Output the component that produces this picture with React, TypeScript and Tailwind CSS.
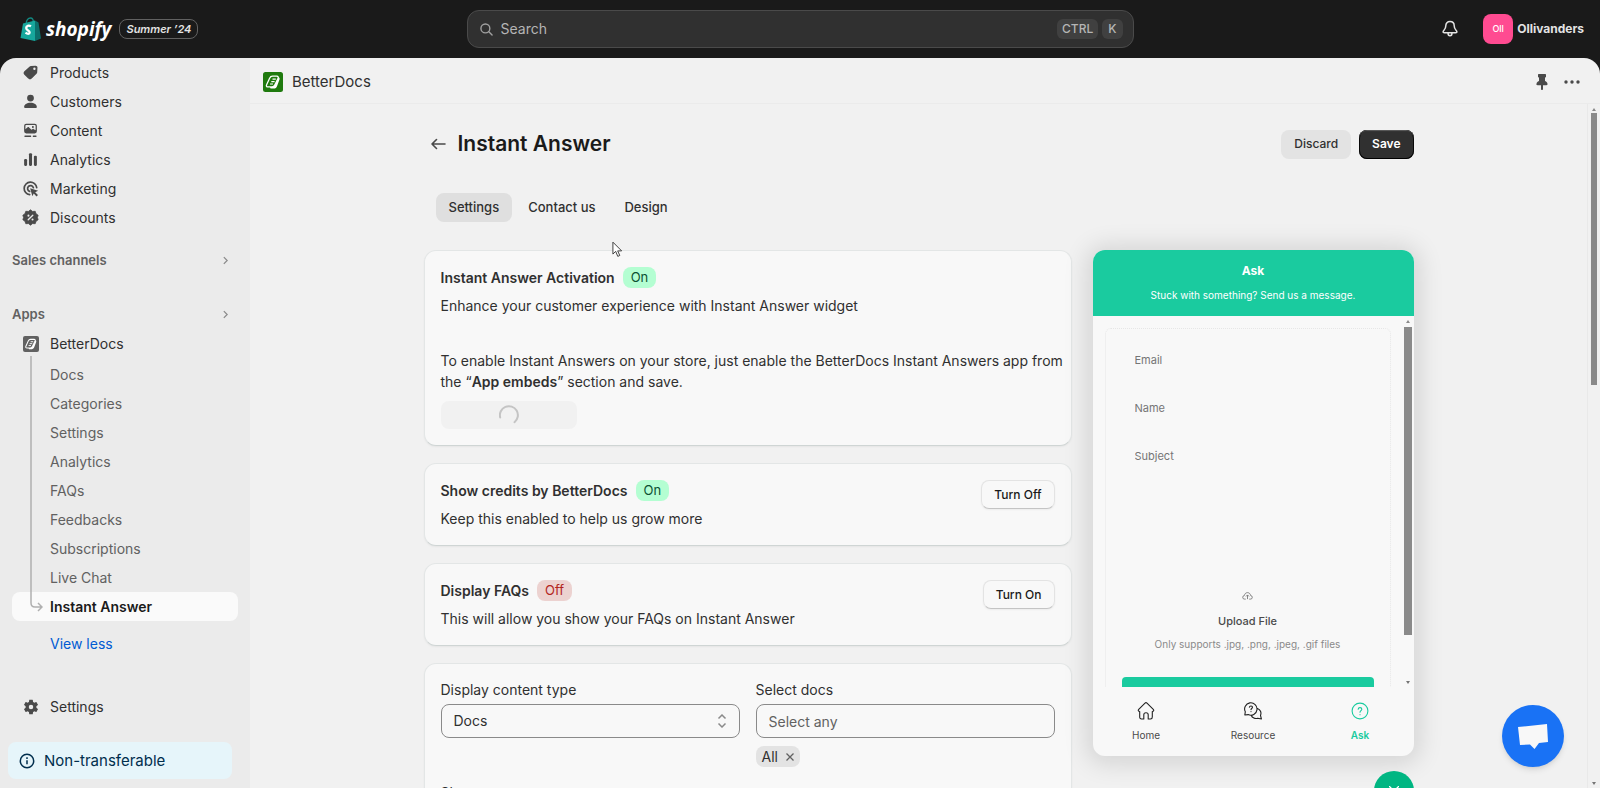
import {ReactNode, useState} from "react";
import clsx from "clsx";

const mainNav = [
  {label: "Products", icon: "tag"},
  {label: "Customers", icon: "person"},
  {label: "Content", icon: "image"},
  {label: "Analytics", icon: "chart"},
  {label: "Marketing", icon: "target"},
  {label: "Discounts", icon: "discount"},
];

const appNav = ["Docs", "Categories", "Settings", "Analytics", "FAQs", "Feedbacks", "Subscriptions", "Live Chat"];

const tabs = ["Settings", "Contact us", "Design"];

const messageFields = ["Email", "Name", "Subject"];

const navIcons: Record<string, ReactNode> = {
  tag: (
      <path
          fillRule="evenodd"
          d="M10.500 2.400 16 2c1.300 0 2.200.9 2.200 2.200l-.3 5.600c0 .7-.3 1.300-.8 1.800l-5.600 5.600c-1.200 1.200-3 1.200-4.200 0L2.800 12.700c-1.200-1.200-1.200-3 0-4.200L8.700 3.200c.5-.5 1.100-.8 1.800-.8ZM14.600 7a1.400 1.400 0 1 0 0-2.800 1.400 1.400 0 0 0 0 2.800Z"
      />
  ),
  person: <path d="M10 2a4 4 0 1 1 0 8 4 4 0 0 1 0-8ZM2.500 16.500c0-3 3.300-5.100 7.500-5.100s7.500 2.100 7.500 5.100c0 .8-.4 1.200-1.200 1.200H3.700c-.8 0-1.200-.4-1.200-1.200Z" />,
  image: (
      <path
          fillRule="evenodd"
          d="M5 2h10A2.500 2.500 0 0 1 17.500 4.500v6.500a2.500 2.500 0 0 1-2.500 2.500h-10A2.500 2.500 0 0 1 2.500 11V4.500a2.500 2.500 0 0 1 2.500-2.500ZM4 8.500l2.600-2.200c.5-.4 1.200-.4 1.700.1l2.900 2.800 1.300-.9c.4-.3 1-.3 1.400.1l2.100 1.400V4.500c0-.6-.4-1-1-1h-10c-.6 0-1 .4-1 1v4ZM12.800 7.100a1.200 1.200 0 1 0 0-2.400 1.200 1.200 0 0 0 0 2.400ZM3.500 15.800h6.700c.9 0 .9 1.700 0 1.700H3.500c-1 0-1-1.700 0-1.700ZM13.300 15.800h3.200c.9 0 .9 1.700 0 1.700h-3.200c-.9 0-.9-1.700 0-1.700Z"
      />
  ),
  chart: (
      <>
        <rect x="2.500" y="9.500" width="3.500" height="8" rx="1.300" />
        <rect x="8.200" y="2.500" width="3.600" height="15" rx="1.300" />
        <rect x="14" y="5.500" width="3.500" height="12" rx="1.300" />
      </>
  ),
  target: (
      <>
        <path d="M17.300 9A7.400 7.400 0 1 0 9 17.300M13.400 9a3.500 3.500 0 1 0-4.400 4.400" fill="none" stroke="currentColor" strokeWidth="2" strokeLinecap="round" />
        <path d="m9.600 9.600 9.400 2.900-3.500 1.800 3.300 3.300-1.700 1.700-3.300-3.300-1.600 3Z" />
      </>
  ),
  discount: (
      <>
        <path d="M10 1 12.400 2.900 15.500 2.700 16.500 5.600 19 7.400 18.100 10 19 12.600 16.500 14.400 15.500 17.300 12.400 17.100 10 19 7.600 17.100 4.500 17.300 3.500 14.400 1 12.600 1.900 10 1 7.400 3.500 5.600 4.500 2.700 7.600 2.900Z" stroke="currentColor" strokeLinejoin="round" />
        <path d="m7.300 12.700 5.400-5.400" stroke="#ebebeb" strokeWidth="1.600" strokeLinecap="round" />
        <circle cx="7.600" cy="7.800" r="1.200" fill="#ebebeb" />
        <circle cx="12.400" cy="12.300" r="1.200" fill="#ebebeb" />
      </>
  ),
};

function NavIcon({name}: {name: string}) {
  return (
      <svg viewBox="0 0 20 20" className="size-[17px] text-[#4a4a4a]" fill="currentColor" aria-hidden="true">
        {navIcons[name]}
      </svg>
  );
}

function BetterDocsIcon({className}: {className: string}) {
  return (
      <svg viewBox="0 0 20 20" className={className} aria-hidden="true">
        <rect width="20" height="20" rx="2.500" fill="currentColor" />
        <path d="M14.500 5c1.800 0 2.500 1 2 2.500l-2.500 6.700c-.5 1.500-1.600 2.300-3.200 2.300H7.500l-.5-1.500h3.500Z" fill="#fff" />
        <path d="M9.500 4.200h4.300c1.300 0 1.800.9 1.300 2l-3.200 6.700c-.6 1.300-1.500 2-2.900 2H5c-1.400 0-2-.9-1.400-2.200l3-6.500c.6-1.300 1.500-2 2.900-2Z" fill="currentColor" stroke="#fff" strokeWidth="1.300" />
        <path d="M9.500 7.200h3.300M8.300 9.600h3.300M7 12h3" stroke="#fff" strokeWidth="1.200" />
      </svg>
  );
}

function ShopifyLogo() {
  return (
      <div className="flex items-center gap-1">
        <svg viewBox="0 0 22 24" className="h-6 w-[22px]" aria-hidden="true">
          <path d="M6 7C6.500 3 8.500 1 10.500 1s3 2 3 5" fill="none" stroke="#128a83" strokeWidth="1.300" />
          <path d="M3 6.500 15 3.500V24L.5 21Z" fill="#17a79c" />
          <path d="m15 3.500 3.500 2L21 21.500 15 24Z" fill="#0c6f6b" />
          <path d="M11 9.300C8.700 8 6.200 8.800 6.200 11c0 2.500 3.600 2.500 3.500 4.600 0 1.600-2.400 1.500-4.200.1" fill="none" stroke="#fff" strokeWidth="2.300" />
        </svg>
        <span className="font-['Open_Sans',sans-serif] text-[19px] leading-6 font-bold text-white italic">shopify</span>
      </div>
  );
}

function Header() {
  return (
      <header className="grid h-[58px] grid-cols-[1fr_667px_1fr] items-center bg-[#1a1a1a] text-[#e3e3e3]">
        <div className="flex items-center gap-2 pl-5">
          <ShopifyLogo />
          <span className="rounded-lg border border-[#616161] px-[6px] text-[11px] leading-[18px] font-semibold italic">Summer ’24</span>
        </div>
        <label className="flex h-[38px] items-center gap-2 rounded-xl border border-[#4a4a4a] bg-[#303030] pr-[10px] pl-3">
          <svg viewBox="0 0 14 14" className="size-[13px] text-[#a0a0a0]" fill="none" stroke="currentColor" strokeWidth="1.500" strokeLinecap="round" aria-hidden="true">
            <circle cx="5.800" cy="5.800" r="4.800" />
            <path d="m9.500 9.500 3.500 3.500" />
          </svg>
          <input type="search" placeholder="Search" aria-label="Search" className="min-w-0 flex-1 bg-transparent text-sm outline-none placeholder:text-[#b5b5b5]" />
          <div className="flex gap-1">
            <kbd className="rounded-md bg-[#404040] px-[5px] font-[Inter,sans-serif] text-xs leading-5 font-medium text-[#b5b5b5]">CTRL</kbd>
            <kbd className="rounded-md bg-[#404040] px-[6px] font-[Inter,sans-serif] text-xs leading-5 font-medium text-[#b5b5b5]">K</kbd>
          </div>
        </label>
        <div className="flex items-center justify-end gap-6 pr-4">
          <button type="button" aria-label="Notifications">
            <svg viewBox="0 0 18 18" className="size-[18px]" fill="none" stroke="currentColor" strokeWidth="1.500" strokeLinejoin="round" aria-hidden="true">
              <path d="M9 1.500c-2.600 0-4.200 1.900-4.200 4.300 0 2.200-.6 3.200-1.800 4.400-.9.900-1.500 2.500.3 2.500h11.400c1.800 0 1.200-1.600.3-2.500-1.200-1.200-1.800-2.200-1.800-4.400 0-2.400-1.600-4.300-4.200-4.300ZM7 13c0 1.500.8 2.800 2 2.800s2-1.300 2-2.800" />
            </svg>
          </button>
          <button type="button" className="flex items-center gap-1 text-xs font-bold">
            <span className="flex size-[30px] items-center justify-center rounded-lg bg-[#ff4b91] text-[9px] font-medium text-white">Oll</span>
            Ollivanders
          </button>
        </div>
      </header>
  );
}

function Chevron() {
  return (
      <svg viewBox="0 0 6 10" className="h-[9px] w-[5px] text-[#8a8a8a]" fill="none" stroke="currentColor" strokeWidth="1.500" aria-hidden="true">
        <path d="m1 1 4 4-4 4" />
      </svg>
  );
}

function Sidebar() {
  return (
      <aside className="flex w-[250px] shrink-0 flex-col bg-[#ebebeb] text-sm text-[#303030]">
        <nav className="flex flex-col px-3">
          {mainNav.map((item) => (
              <a key={item.label} href="#" className="flex h-[29px] items-center gap-[11px] pl-[10px]">
                <NavIcon name={item.icon} />
                {item.label}
              </a>
          ))}
          <button type="button" className="mt-[14px] flex h-[29px] items-center justify-between pr-[10px] text-[13px] font-semibold text-[#616161]">
            Sales channels
            <Chevron />
          </button>
          <button type="button" className="mt-[25px] flex h-[29px] items-center justify-between pr-[10px] text-[13px] font-semibold text-[#616161]">
            Apps
            <Chevron />
          </button>
          <a href="#" className="flex h-[29px] items-center gap-[11px] pl-[11px]">
            <BetterDocsIcon className="size-4 text-[#616161]" />
            BetterDocs
          </a>
          <div className="relative flex flex-col pt-[2px] text-[#616161]">
            {appNav.map((label) => (
                <a key={label} href="#" className="flex h-[29px] items-center pl-[38px]">{label}</a>
            ))}
            <a href="#" className="flex h-[29px] items-center rounded-lg bg-[#fafafa] pl-[38px] font-semibold text-[#1a1a1a]">Instant Answer</a>
            {/* connector from the app icon down to the active page */}
            <svg viewBox="0 0 13 257" className="absolute bottom-[8px] left-[18px] h-[257px] w-[13px] text-[#b0b0b0]" fill="none" stroke="currentColor" strokeWidth="1.500" aria-hidden="true">
              <path d="M1 0v247q0 4 4 4h6M8 247l4 4-4 4" />
            </svg>
          </div>
          <a href="#" className="mt-2 flex h-[29px] items-center pl-[38px] text-[#005bd3]">View less</a>
        </nav>
        <div className="mt-auto flex flex-col px-2 pb-[9px]">
          <a href="#" className="flex h-[29px] items-center gap-[10px] pl-[14px]">
            <svg viewBox="0 0 24 24" className="size-[18px] text-[#4a4a4a]" fill="currentColor" aria-hidden="true">
              <path d="M19.140 12.940c.040-.3.060-.610.060-.940 0-.320-.020-.640-.070-.940l2.030-1.580a.490.490 0 0 0 .120-.610l-1.920-3.320a.488.488 0 0 0-.590-.220l-2.390.960c-.5-.380-1.030-.7-1.620-.940l-.360-2.540a.484.484 0 0 0-.480-.410h-3.840c-.240 0-.430.170-.470.410l-.360 2.540c-.590.240-1.130.570-1.620.940l-2.390-.960c-.220-.080-.470 0-.590.220L2.740 8.870c-.120.210-.080.470.120.610l2.030 1.580c-.050.3-.090.630-.090.940s.020.640.070.940l-2.030 1.580a.490.490 0 0 0-.120.610l1.920 3.320c.120.220.370.290.590.220l2.390-.960c.5.380 1.030.7 1.620.940l.360 2.540c.050.240.240.410.480.410h3.840c.240 0 .440-.170.470-.410l.360-2.540c.590-.240 1.130-.560 1.620-.940l2.390.960c.220.080.470 0 .590-.220l1.920-3.320c.120-.220.070-.470-.120-.610l-2.010-1.580zM12 15a3 3 0 1 1 0-6 3 3 0 0 1 0 6z" />
            </svg>
            Settings
          </a>
          <a href="#" className="mt-[21px] mr-[10px] flex h-[37px] items-center gap-[9px] rounded-lg bg-[#e6f5fa] pl-[11px] text-[15px] text-[#002e4d]">
            <svg viewBox="0 0 16 16" className="size-4" fill="none" stroke="currentColor" strokeWidth="1.500" aria-hidden="true">
              <circle cx="8" cy="8" r="6.700" />
              <path d="M8 7.200v4M8 4.300v1.600" />
            </svg>
            Non-transferable
          </a>
        </div>
      </aside>
  );
}

function Badge({on}: {on: boolean}) {
  return (
      <span className={clsx("rounded-lg px-2 text-[13px] leading-[21px]", on ? "bg-[#b4fed2] text-[#0c5132]" : "bg-[#ecd2d0] text-[#b3261e]")}>
        {on ? "On" : "Off"}
      </span>
  );
}

function Card({children}: {children: ReactNode}) {
  return <section className="rounded-xl border border-[#e3e6e6] border-b-[#cfd5d4] bg-[#f8f8f8] p-4 shadow-xs">{children}</section>;
}

type ToggleCardProps = {
  title: string;
  text: string;
  on: boolean;
};

function ToggleCard({title, text, on}: ToggleCardProps) {
  return (
      <Card>
        <div className="flex items-start justify-between">
          <div>
            <div className="flex items-center gap-2">
              <h2 className="font-semibold">{title}</h2>
              <Badge on={on} />
            </div>
            <p className="mt-2 leading-5">{text}</p>
          </div>
          <button type="button" className="h-[29px] rounded-lg border border-[#e3e3e3] border-b-[#c4c4c4] px-3 text-xs font-medium text-[#1a1a1a] shadow-xs">
            {on ? "Turn Off" : "Turn On"}
          </button>
        </div>
      </Card>
  );
}

function ContentCard() {
  return (
      <Card>
        <div className="grid grid-cols-2 gap-4">
          <div className="flex flex-col">
            <label htmlFor="content-type" className="leading-5">Display content type</label>
            <div className="relative mt-1">
              <select id="content-type" className="h-[34px] w-full appearance-none rounded-lg border border-[#8a8a8a] px-3">
                <option>Docs</option>
              </select>
              <svg viewBox="0 0 10 14" className="pointer-events-none absolute top-[10px] right-[13px] h-[14px] w-[10px] text-[#8a8a8a]" fill="none" stroke="currentColor" strokeWidth="1.500" aria-hidden="true">
                <path d="m1.500 4.500 3.500-3.500 3.500 3.500M1.500 9.500l3.500 3.500 3.500-3.500" />
              </svg>
            </div>
          </div>
          <div className="flex flex-col items-start">
            <label htmlFor="docs" className="leading-5">Select docs</label>
            <input id="docs" placeholder="Select any" className="mt-1 h-[34px] w-full rounded-lg border border-[#8a8a8a] px-3 placeholder:text-[#616161]" />
            <span className="mt-2 flex h-[21px] items-center gap-2 rounded-lg bg-[#e3e3e3] px-[6px]">
              All
              <button type="button" aria-label="Remove All" className="text-[#616161]">
                <svg viewBox="0 0 8 8" className="size-2" fill="none" stroke="currentColor" strokeWidth="1.300" aria-hidden="true">
                  <path d="m.5.5 7 7M7.500.5l-7 7" />
                </svg>
              </button>
            </span>
          </div>
        </div>
        <label htmlFor="show-on" className="mt-4 block leading-5">Show on</label>
        <input id="show-on" className="mt-1 h-[34px] w-full rounded-lg border border-[#8a8a8a] px-3" />
      </Card>
  );
}

function WidgetPreview() {
  return (
      <div className="w-[321px] shrink-0">
        <div className="flex h-[506px] flex-col overflow-hidden rounded-xl bg-[#f8f8f8] shadow-[0_2px_24px_6px_rgba(0,0,0,0.12)]">
          <div className="flex h-[66px] shrink-0 flex-col items-center bg-[#1acb9f] pt-[11px] text-white">
            <h2 className="text-xs leading-5 font-bold">Ask</h2>
            <p className="mt-1 text-[10px] leading-5">Stuck with something? Send us a message.</p>
          </div>
          <div className="flex min-h-0 flex-1 text-[11px]">
            <div className="min-w-0 flex-1 overflow-hidden pt-3 pl-3">
              <div className="mr-[11px] flex h-[440px] flex-col rounded-md border border-dotted border-[#e6e6e6] px-4 pt-3">
                {messageFields.map((field) => (
                    <input key={field} placeholder={field} aria-label={field} className="mb-[10px] h-[38px] px-[13px] placeholder:text-[#757575]" />
                ))}
                <textarea aria-label="Message" className="h-[89px] resize-none px-3" />
                <label className="flex flex-col items-center pt-[18px]">
                  <svg viewBox="0 0 12 9" className="h-2 w-[11px] text-[#757575]" fill="none" stroke="currentColor" strokeWidth="1" aria-hidden="true">
                    <path d="M4 8H2.800a2 2 0 0 1-.3-4C2.700 2 4.300.7 6 .7S9.300 2 9.500 4a2 2 0 0 1-.3 4H8M6 8V3.500M4.300 5 6 3.300 7.700 5" />
                  </svg>
                  <span className="mt-[11px] leading-5 font-medium text-[#4a4a4a]">Upload File</span>
                  <span className="mt-[3px] text-[10px] leading-5 text-[#8a8a8a]">Only supports .jpg, .png, .jpeg, .gif files</span>
                  <input type="file" className="hidden" />
                </label>
                <button type="button" aria-label="Send" className="mt-[23px] h-9 shrink-0 rounded-sm bg-[#1acb9f]" />
              </div>
            </div>
            <div className="flex w-[12px] flex-col items-center pt-1 pb-[3px]">
              <svg viewBox="0 0 4 3" className="h-[3px] w-1 fill-[#8a8a8a]" aria-hidden="true"><path d="M0 3 2 0l2 3Z" /></svg>
              <div className="mt-1 h-[308px] w-2 bg-[#8a8a8a]" />
              <svg viewBox="0 0 4 3" className="mt-auto h-[3px] w-1 fill-[#757575]" aria-hidden="true"><path d="m0 0 2 3 2-3Z" /></svg>
            </div>
          </div>
          <nav className="grid h-[69px] shrink-0 grid-cols-3 text-[10px] leading-4 text-[#4a4a4a]">
            <a href="#" className="flex flex-col items-center gap-[7px] pt-[15px]">
              <svg viewBox="0 0 18 18" className="size-[18px]" fill="none" stroke="#222" strokeWidth="1.100" strokeLinejoin="round" strokeLinecap="round" aria-hidden="true">
                <path d="M2.700 9.500c-1.300 0-1.900-1.300-1-2.200L8 1.200c.6-.6 1.400-.6 2 0l6.300 6.100c.9.900.3 2.200-1 2.200v5.500c0 1.200-.6 2-1.800 2h-2.300v-4.200c0-1.300-.7-2-2.200-2s-2.200.7-2.200 2V17H4.500c-1.200 0-1.800-.8-1.800-2Z" />
              </svg>
              Home
            </a>
            <a href="#" className="flex flex-col items-center gap-[7px] pt-[15px]">
              <svg viewBox="0 0 18 18" className="size-[18px]" fill="none" stroke="#222" strokeWidth="1.100" strokeLinejoin="round" strokeLinecap="round" aria-hidden="true">
                <path d="M.8 13 1.300 9.800A6.200 6.200 0 1 1 4.200 12.600ZM13.500 6.500a5 5 0 0 1 3 6.800l.9 3.700-3.700-.8a5 5 0 0 1-6.500-3" />
                <path d="M5.400 5.200c.2-1.700 3.100-1.600 3.100.1 0 1.100-1.500 1.200-1.500 2.300M7 9.500v.1" />
              </svg>
              Resource
            </a>
            <a href="#" className="flex flex-col items-center gap-[7px] pt-[15px] font-semibold text-[#1acb9f]">
              <svg viewBox="0 0 18 18" className="size-[18px]" fill="none" stroke="currentColor" strokeWidth="1.100" strokeLinecap="round" aria-hidden="true">
                <circle cx="9" cy="9" r="7.900" />
                <path d="M7.200 7.200c.2-2.200 3.600-2 3.600.1 0 1.300-1.800 1.500-1.800 3M9 12.500v.2" />
              </svg>
              Ask
            </a>
          </nav>
        </div>
        <div className="mt-[15px] flex justify-end">
          <button type="button" aria-label="Close widget" className="flex size-10 items-center justify-center rounded-full bg-[#00b682] text-white">
            <svg viewBox="0 0 12 12" className="size-[10px]" fill="none" stroke="currentColor" strokeWidth="1.500" aria-hidden="true">
              <path d="m0 0 12 12M12 0 0 12" />
            </svg>
          </button>
        </div>
      </div>
  );
}

export default function App() {
  const [activeTab, setActiveTab] = useState("Settings");

  return (
      <div className="flex h-screen flex-col overflow-hidden bg-[#1a1a1a] font-[Inter,sans-serif] text-sm text-[#303030]">
        <Header />
        <div className="relative flex min-h-0 flex-1 overflow-hidden rounded-t-2xl">
          <Sidebar />
          <div className="flex min-w-0 flex-1 flex-col bg-[#f1f1f1]">
            <div className="flex h-[46px] shrink-0 items-center border-b border-[#ebebeb] pt-[2px] pr-5 pl-[13px]">
              <BetterDocsIcon className="size-5 text-[#1f7a0e]" />
              <span className="ml-[9px] text-[15px]">BetterDocs</span>
              <button type="button" aria-label="Pin app" className="ml-auto">
                <svg viewBox="0 0 12 16" className="h-4 w-3 fill-[#4a4a4a]" aria-hidden="true">
                  <path d="M2 1c0-.6.300-1 1-1h6c.7 0 1 .400 1 1v1.500c0 .6-.5.900-1 1V7c1.500.600 2.500 1.600 2.500 3 0 .8-.3 1.200-1 1.200H7V15c0 1.300-2 1.300-2 0v-3.800H1.500c-.7 0-1-.4-1-1.200 0-1.400 1-2.400 2.500-3V3.500c-.5-.1-1-.4-1-1Z" />
                </svg>
              </button>
              <button type="button" aria-label="More actions" className="ml-4">
                <svg viewBox="0 0 16 4" className="h-1 w-4 fill-[#4a4a4a]" aria-hidden="true">
                  <circle cx="2" cy="2" r="1.700" />
                  <circle cx="8" cy="2" r="1.700" />
                  <circle cx="14" cy="2" r="1.700" />
                </svg>
              </button>
            </div>
            <div className="flex min-h-0 flex-1">
              <main className="min-w-0 flex-1 overflow-hidden">
                <div className="mx-auto max-w-[990px] pt-[25px]">
                  <div className="flex items-center">
                    <a href="#" aria-label="Back" className="ml-[7px]">
                      <svg viewBox="0 0 15 12" className="h-3 w-[15px]" fill="none" stroke="#4a4a4a" strokeWidth="1.600" strokeLinecap="round" strokeLinejoin="round" aria-hidden="true">
                        <path d="M14 6H1M5.500 1.500 1 6l4.500 4.500" />
                      </svg>
                    </a>
                    <h1 className="ml-3 text-[21px] leading-[30px] font-semibold text-[#1a1a1a]">Instant Answer</h1>
                    <button type="button" className="ml-auto h-[29px] rounded-lg bg-[#e3e3e3] px-[13px] text-xs font-medium">Discard</button>
                    <button type="button" className="ml-2 h-[29px] rounded-lg bg-[#303030] px-[13px] text-xs font-semibold text-white inset-shadow-[0_1px_1px_#616161] ring-1 ring-black ring-inset">Save</button>
                  </div>
                  <div role="tablist" className="mt-[34px] ml-3 flex gap-[3px]">
                    {tabs.map((tab) => (
                        <button
                            key={tab}
                            type="button"
                            role="tab"
                            aria-selected={tab === activeTab}
                            onClick={() => setActiveTab(tab)}
                            className={clsx("h-[29px] rounded-lg px-[13px] text-[13px] font-medium", tab === activeTab && "bg-[#dfdfdf]")}
                        >
                          {tab}
                        </button>
                    ))}
                  </div>
                  <div className="mt-7 flex items-start gap-[21px]">
                    <div className="flex min-w-0 flex-1 flex-col gap-[17px]">
                      <Card>
                        <div className="flex items-center gap-2">
                          <h2 className="font-semibold">Instant Answer Activation</h2>
                          <Badge on />
                        </div>
                        <p className="mt-2 leading-5">Enhance your customer experience with Instant Answer widget</p>
                        <p className="-mr-3 mt-[34px] leading-[21px]">
                          To enable Instant Answers on your store, just enable the BetterDocs Instant Answers app from the “<strong className="font-semibold">App embeds</strong>” section and save.
                        </p>
                        <button type="button" disabled aria-label="Loading" className="mt-[9px] flex h-7 w-[136px] items-center justify-center rounded-lg bg-[#f1f1f1]">
                          <svg viewBox="0 0 20 20" className="size-5" fill="none" stroke="#c4c4c4" strokeWidth="2" strokeLinecap="round" aria-hidden="true">
                            <path d="M1.200 12.500A9 9 0 1 1 15.500 17.200" />
                          </svg>
                        </button>
                      </Card>
                      <ToggleCard title="Show credits by BetterDocs" text="Keep this enabled to help us grow more" on />
                      <ToggleCard title="Display FAQs" text="This will allow you show your FAQs on Instant Answer" on={false} />
                      <ContentCard />
                    </div>
                    <WidgetPreview />
                  </div>
                </div>
              </main>
              <div className="flex w-[13px] flex-col items-center border-l border-[#e9e9e9] pt-1 pb-[3px]">
                <svg viewBox="0 0 4 3" className="h-[3px] w-1 fill-[#8a8a8a]" aria-hidden="true"><path d="M0 3 2 0l2 3Z" /></svg>
                <div className="mt-[2px] h-[272px] w-[6px] bg-[#8a8a8a]" />
                <svg viewBox="0 0 4 3" className="mt-auto h-[3px] w-1 fill-[#757575]" aria-hidden="true"><path d="m0 0 2 3 2-3Z" /></svg>
              </div>
            </div>
          </div>
          <button type="button" aria-label="Open chat" className="absolute right-9 bottom-[21px] flex size-[62px] items-center justify-center rounded-full bg-[#1972f5] shadow-md">
            <svg viewBox="0 0 32 28" className="h-7 w-8 fill-[#f8f8f8]" aria-hidden="true">
              <path d="M1 5 30 2 31 20 22 21 17.500 27 13 22.500 3 23Z" />
            </svg>
          </button>
          {/* pointer */}
          <svg viewBox="0 0 12 18" className="absolute top-[183px] left-[612px] h-[17px] w-[11px]" fill="#fff" stroke="#333" strokeWidth="1" aria-hidden="true">
            <path d="M1 1v13l3-3 2.300 5.500 2.200-1L6.200 10.500H10.500Z" />
          </svg>
        </div>
      </div>
  );
}
